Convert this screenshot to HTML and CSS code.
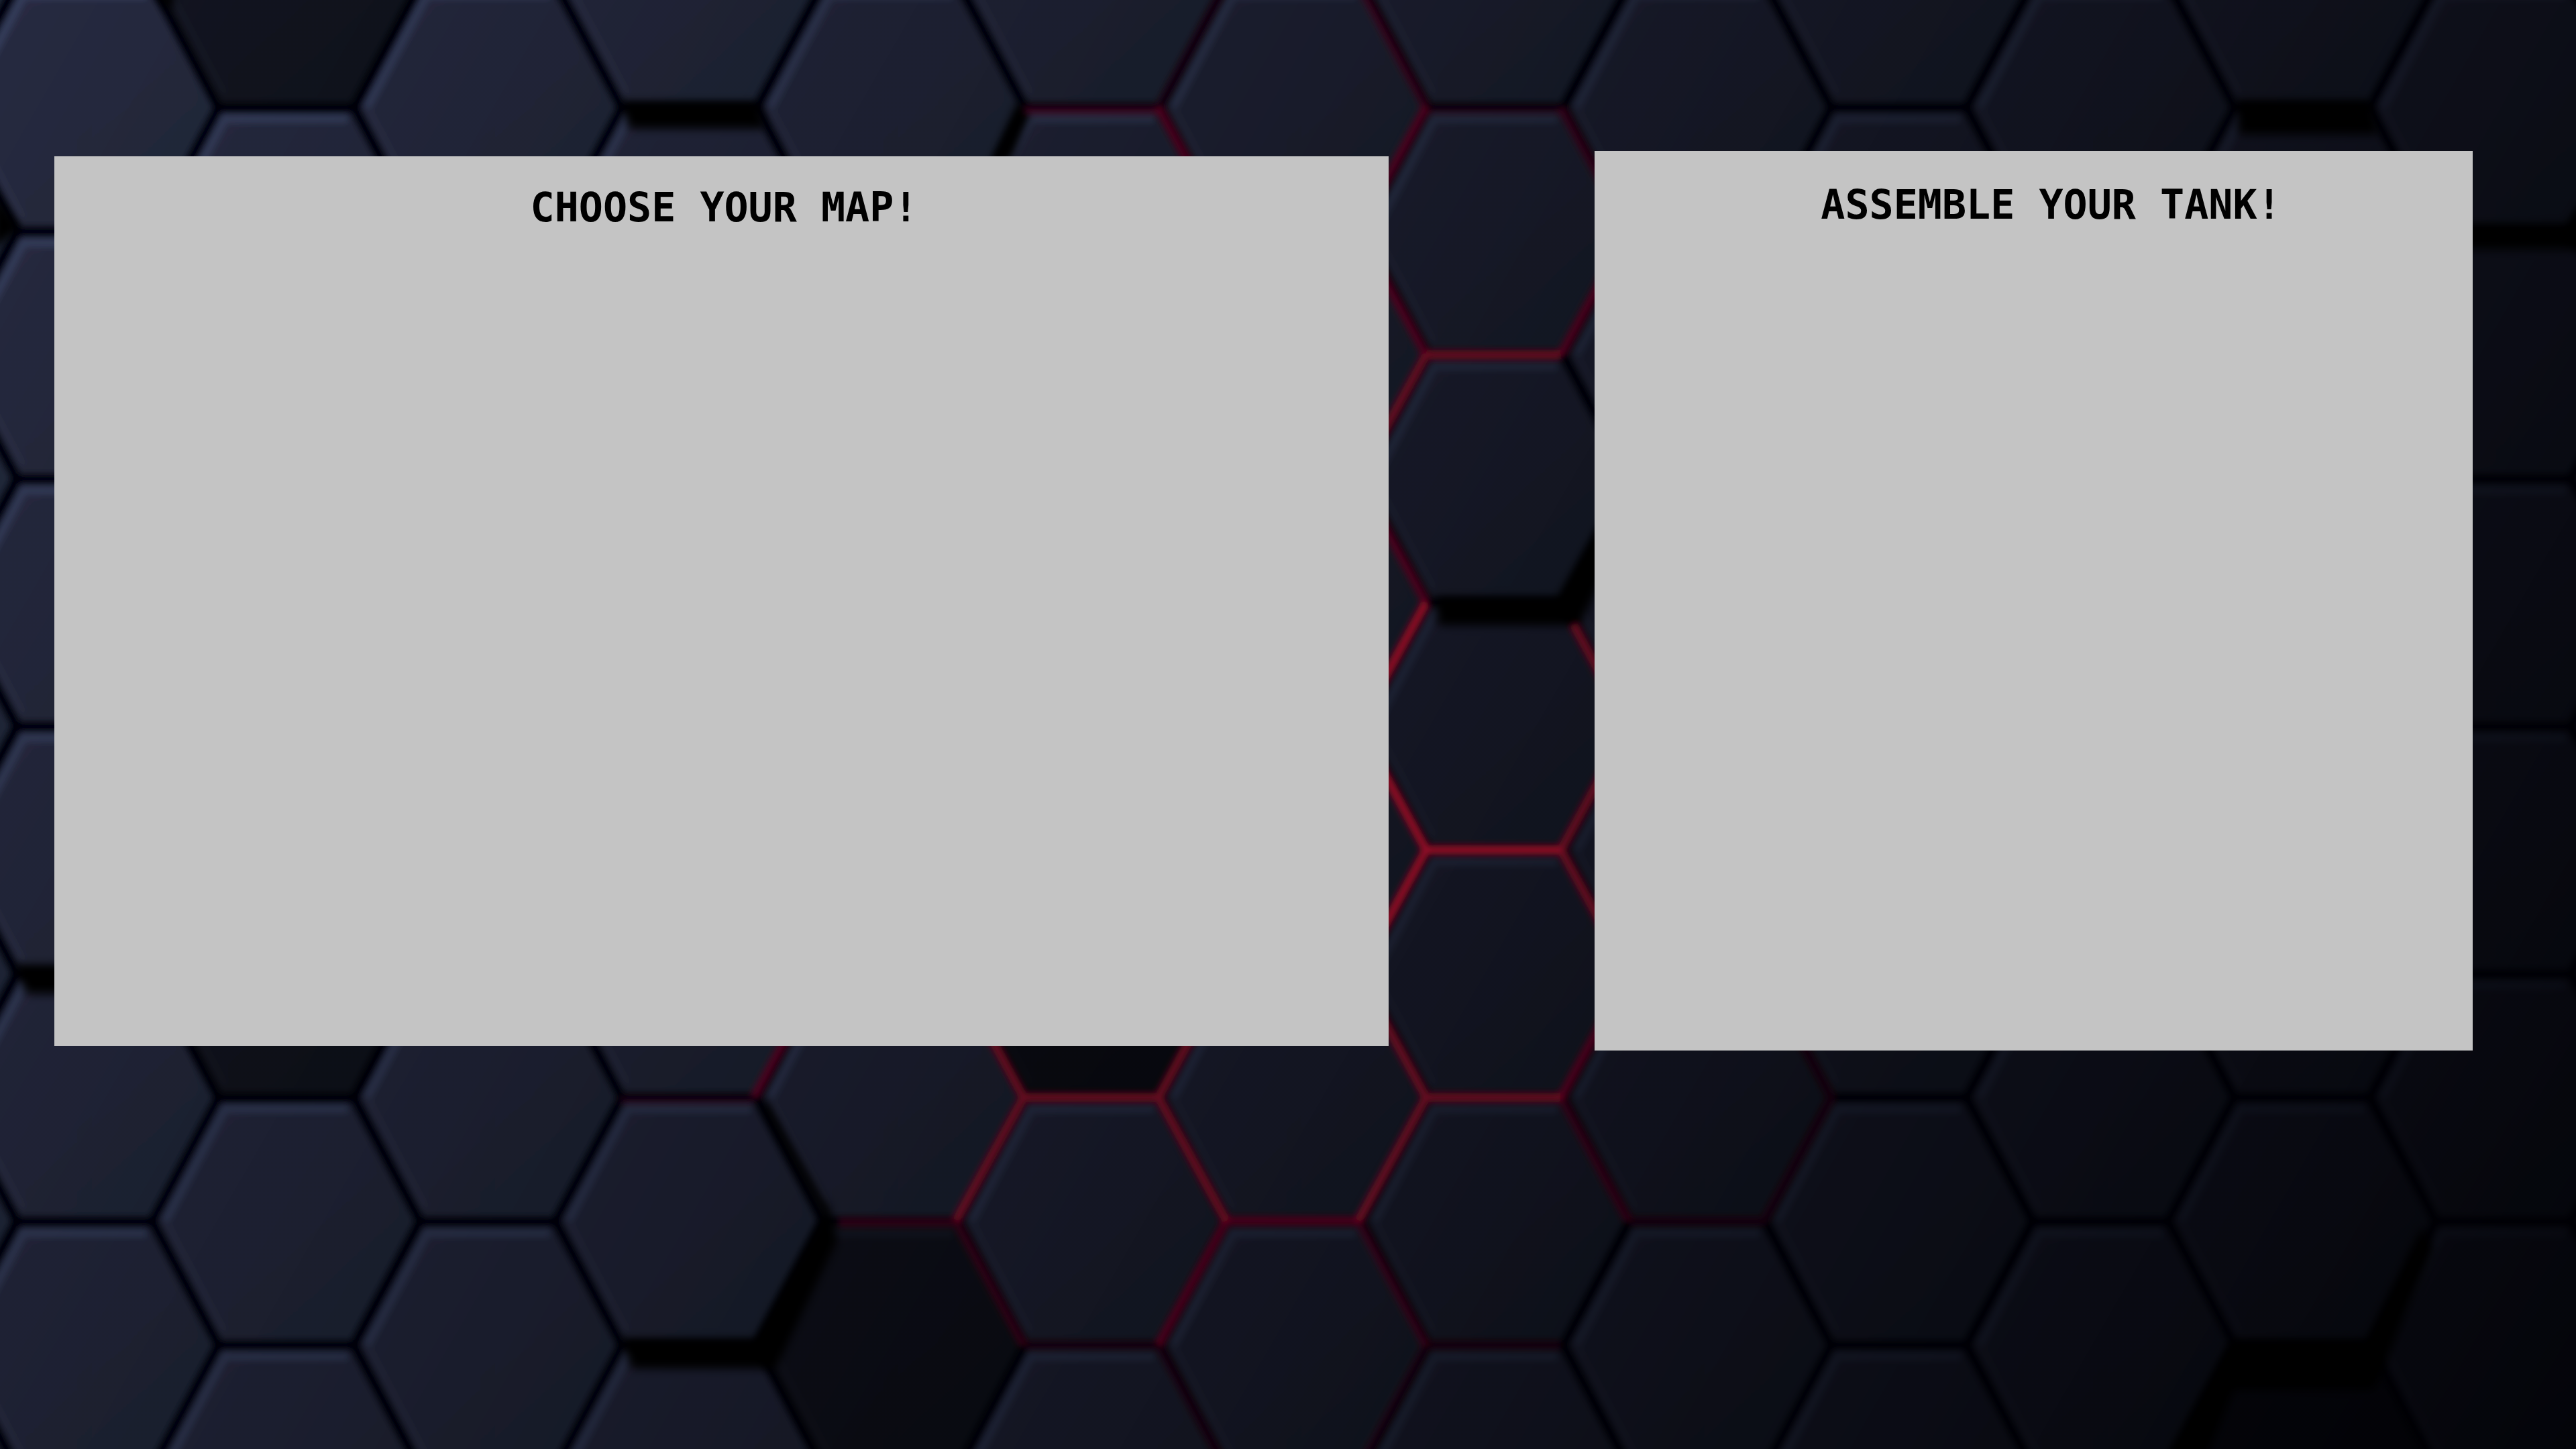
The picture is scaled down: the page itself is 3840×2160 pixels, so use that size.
FILE: index.html
```html
<!DOCTYPE html>
<html lang="en">
<head>
<meta charset="utf-8">
<meta name="viewport" content="width=device-width, initial-scale=1">
<title>Tank setup</title>
<link rel="stylesheet" href="styles.css">
</head>
<body>
<svg class="backdrop" viewBox="0 0 3840 2160" preserveAspectRatio="xMidYMid slice" aria-hidden="true">
  <defs>
    <linearGradient id="face" x1="0" y1="0" x2="1" y2="1">
      <stop offset="0" stop-color="#2a2c43"/>
      <stop offset="0.5" stop-color="#262b3f"/>
      <stop offset="1" stop-color="#222b3b"/>
    </linearGradient>
    <linearGradient id="shade" gradientUnits="userSpaceOnUse" x1="0" y1="0" x2="3820" y2="2200">
      <stop offset="0" stop-color="#000003" stop-opacity="0"/>
      <stop offset="1" stop-color="#000003" stop-opacity="0.88"/>
    </linearGradient>
    <filter id="soft" filterUnits="userSpaceOnUse" x="-60" y="-60" width="3960" height="2280">
      <feGaussianBlur stdDeviation="5"/>
    </filter>
    <filter id="softer" filterUnits="userSpaceOnUse" x="-60" y="-60" width="3960" height="2280">
      <feGaussianBlur stdDeviation="7"/>
    </filter>
    <path id="cell" d="M-100-184H101L200 0 101 185H-100L-199 0Z"/>
    <!-- One tile: face, lit top-left rim, dark seam -->
    <g id="tile">
      <use href="#cell" fill="url(#face)"/>
      <path class="rim" d="M-180 0-91-167H92"/>
      <path class="rim rim-low" d="M-180 0-93 164"/>
      <use href="#cell" class="seam"/>
    </g>
    <pattern id="comb" patternUnits="userSpaceOnUse" x="126" y="160" width="601" height="369">
      <use href="#tile" x="0" y="0"/>
      <use href="#tile" x="601" y="0"/>
      <use href="#tile" x="0" y="369"/>
      <use href="#tile" x="601" y="369"/>
      <use href="#tile" x="300" y="184"/>
    </pattern>
  </defs>

  <rect x="-60" y="-60" width="3960" height="2280" fill="url(#comb)" filter="url(#soft)"/>

  <!-- Sunken tiles -->
  <g class="sunken" filter="url(#soft)">
    <use href="#cell" x="426" y="-25" opacity="0.48"/>
    <use href="#cell" x="426" y="1451" opacity="0.5"/>
    <use href="#cell" x="1627" y="1451" opacity="0.6"/>
    <use href="#cell" x="1327" y="2005" opacity="0.5"/>
    <use href="#cell" x="3431" y="2190" opacity="0.5"/>
  </g>

  <rect width="3840" height="2160" fill="url(#shade)"/>

  <!-- Shadows under raised tiles -->
  <g class="drop" filter="url(#softer)">
    <path d="M926 152H1130L1140 192H938Z"/>
    <path d="M926 1996H1126L1222 1822 1234 1790 1248 1850 1156 2040H942Z"/>
    <path d="M1135 1650 1230 1820 1240 1810 1142 1640Z"/>
    <path d="M2140 890H2322L2420 720V800L2354 932H2144Z"/>
    <path d="M3334 150H3532L3545 200H3338Z"/>
    <path d="M3326 1998H3528L3610 1830 3626 1860 3540 2072H3330L3290 2170H3230Z"/>
    <path d="M3630 334H3826L3850 300V372H3630Z"/>
    <path d="M-10 285 30 340-10 372Z"/>
    <path d="M20 1438H240V1482H40Z"/>
    <path d="M1518 150 1478 240H1506L1534 170Z"/>
    <path d="M230-10H262L252 16Z"/>
  </g>

  <!-- Red light in the seams -->
  <g class="glow" filter="url(#soft)">
    <path opacity="1" d="M2126 898 2025 1082 2126 1267 2025 1451M2126 1267H2327"/>
    <path opacity="0.7" d="M2126 529 2025 713M2126 529H2327M2345 930 2428 1082 2327 1267 2428 1451M2025 1451 2126 1636H2327M1425 1451 1526 1636H1727L1828 1451M1526 1636 1425 1820M1727 1636 1828 1820M2126 1636 2025 1820"/>
    <path opacity="0.5" d="M1828 1820H2025M2327 1636 2428 1451M2126 160 2025 344 2126 529M2327 529 2428 344M2025 713 2126 898M1727 160 1828 344M1828 1820 1727 2005M1124 1636 1225 1451"/>
    <path opacity="0.3" d="M2327 1636 2428 1820M2025 1820 2126 2005M1425 1820 1526 2005M1526 164H1727M2126 160 2025-25M2327 160 2428 344M1250 1822H1425"/>
    <path opacity="0.14" d="M2126 164H2327M1727 160 1828-25M1526 2005H1727L1828 2190M2126 2005H2327M2126 2005 2025 2190M2428 1820H2629L2730 1636 2629 1451M923 1640H1124"/>
  </g>
</svg>

<main class="setup">
  <section class="panel panel-map" aria-labelledby="map-title">
    <h1 class="panel-title" id="map-title">CHOOSE YOUR MAP!</h1>
  </section>
  <section class="panel panel-tank" aria-labelledby="tank-title">
    <h1 class="panel-title" id="tank-title">ASSEMBLE YOUR TANK!</h1>
  </section>
</main>
</body>
</html>
```
FILE: styles.css
```css
* {
  box-sizing: border-box;
}

body {
  margin: 0;
  min-height: 100vh;
  background: #10131c;
  color: #000;
  font-family: "DejaVu Sans Mono", "Liberation Mono", monospace;
}

.backdrop {
  position: fixed;
  inset: 0;
  width: 100%;
  height: 100%;
  z-index: -1;
}

.seam {
  fill: none;
  stroke: #04060d;
  stroke-width: 17;
}

.rim {
  fill: none;
  stroke: #363c5c;
  stroke-width: 12;
}

.rim-low {
  stroke: #2e324a;
  stroke-width: 8;
}

.sunken {
  fill: #00040a;
}

.drop {
  fill: #000002;
}

.glow {
  fill: none;
  stroke: #8c0a28;
  stroke-width: 14;
}

.setup {
  display: grid;
  grid-template-columns: 1989fr 1309fr;
  align-items: center;
  gap: 307px;
  padding: 225px 154px 80px 81px;
}

.panel {
  min-width: 0;
  padding-top: 36px;
  background: #c4c4c4;
}

.panel-map {
  aspect-ratio: 3 / 2;
  padding-left: 8px;
}

.panel-tank {
  aspect-ratio: 1309 / 1341;
  padding-top: 40px;
  padding-left: 52px;
}

.panel-title {
  margin: 0;
  font-size: 60px;
  line-height: 80px;
  font-weight: 700;
  text-align: center;
}
```
